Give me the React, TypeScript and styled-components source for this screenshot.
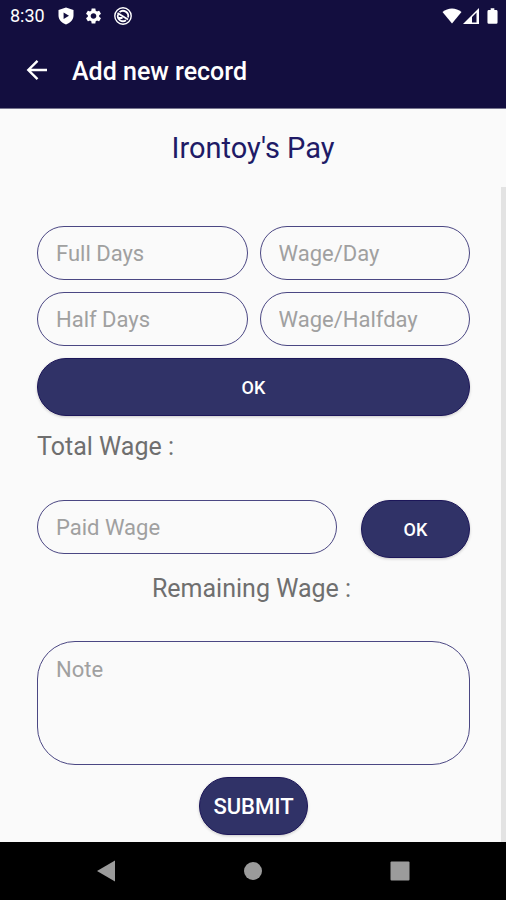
import React from "react";
import styled, { createGlobalStyle } from "styled-components";

const GlobalStyle = createGlobalStyle`
  * { box-sizing: border-box; }
  body {
    margin: 0;
    background: #fafafa;
    font-family: Roboto, "Liberation Sans", sans-serif;
  }
`;

const Screen = styled.div`
  display: flex;
  flex-direction: column;
  min-height: 100vh;
  background: #fafafa;
`;

const StatusBar = styled.div`
  display: flex;
  justify-content: space-between;
  align-items: center;
  height: 32px;
  padding: 0 8px 0 10px;
  background: #130e3f;
  color: #fff;
  font-size: 18px;
  line-height: 32px;
`;

const StatusGroup = styled.div<{ $gap: number }>`
  display: flex;
  align-items: center;
  gap: ${({ $gap }) => $gap}px;
  svg { display: block; }
`;

const Time = styled.span`
  margin-right: 3px;
`;

const AppBar = styled.header`
  display: flex;
  align-items: center;
  gap: 22px;
  height: 77px;
  padding: 0 24px;
  background: #130e3f;
  border-bottom: 1px solid #77758e;
  color: #fff;
`;

const BackButton = styled.button`
  display: block;
  padding: 0;
  border: 0;
  background: none;
  color: inherit;
  svg { display: block; }
`;

const BarTitle = styled.h1`
  margin: 0;
  padding-top: 4px;
  font-size: 25px;
  line-height: 32px;
  font-weight: 500;
`;

const PageTitle = styled.h2`
  margin: 0;
  padding: 20px 0;
  color: #201a66;
  font-size: 29px;
  line-height: 38px;
  font-weight: 400;
  text-align: center;
`;

const ScrollArea = styled.main`
  flex: 1;
  display: flex;
`;

const ScrollTrack = styled.div`
  width: 5px;
  background: #e3e3e3;
`;

const Form = styled.form`
  flex: 1;
  min-width: 0;
  display: flex;
  flex-direction: column;
  gap: 12px;
  padding: 39px 31px 7px 37px;
`;

const FieldGrid = styled.div`
  display: grid;
  grid-template-columns: 1fr 1fr;
  gap: 12px;
`;

const PaidRow = styled.div`
  display: grid;
  grid-template-columns: 1fr 109px;
  align-items: start;
  gap: 24px;
`;

const Field = styled.input`
  width: 100%;
  min-width: 0;
  height: 54px;
  padding: 0 18px;
  border: 1px solid #4b4783;
  border-radius: 27px;
  background: transparent;
  color: #212121;
  font: 400 22px/28px Roboto, "Liberation Sans", sans-serif;
  &::placeholder { color: #a0a0a0; opacity: 1; }
`;

const NoteField = styled.textarea`
  display: block;
  width: 100%;
  height: 124px;
  padding: 14px 18px;
  border: 1px solid #4b4783;
  border-radius: 38px;
  background: transparent;
  color: #212121;
  font: 400 22px/28px Roboto, "Liberation Sans", sans-serif;
  resize: none;
  &::placeholder { color: #a0a0a0; opacity: 1; }
`;

const PillButton = styled.button<{ $large?: boolean }>`
  height: 58px;
  padding: 2px 0 0;
  border: 1px solid #1c1659;
  border-radius: 29px;
  background: #303267;
  box-shadow: 0 1px 3px rgba(0, 0, 0, 0.2);
  color: #fff;
  font: 500 ${({ $large }) => ($large ? 22 : 18)}px/28px Roboto, "Liberation Sans", sans-serif;
`;

const SubmitButton = styled(PillButton)`
  align-self: center;
  width: 109px;
`;

const Result = styled.output<{ $centered?: boolean }>`
  display: block;
  height: ${({ $centered }) => ($centered ? 59 : 60)}px;
  padding: 3px 4px 0 0;
  color: #6f6f6f;
  font-size: 25px;
  line-height: 32px;
  text-align: ${({ $centered }) => ($centered ? "center" : "left")};
`;

const NavBar = styled.nav`
  display: grid;
  grid-template-columns: repeat(3, 1fr);
  height: 58px;
  padding: 0 32px;
  background: #000;
`;

const NavButton = styled.button`
  display: flex;
  align-items: center;
  justify-content: center;
  padding: 0;
  border: 0;
  background: none;
  color: #9b9b9b;
`;

const ShieldIcon = () => (
  <svg width="16" height="18" viewBox="0 0 16 18" aria-hidden="true">
    <path fill="#fff" fillRule="evenodd" d="M8 0.5 15.5 3v5.5c0 4.2-3.1 7.4-7.5 9-4.4-1.600-7.500-4.800-7.500-9V3ZM5.600 5.500v6.500L11 8.750Z" />
  </svg>
);

const GearIcon = () => (
  <svg width="19" height="20" viewBox="0 0 24 24" aria-hidden="true">
    <path fill="#fff" d="M19.140 12.940c.040-.300.060-.610.060-.940 0-.320-.020-.640-.070-.940l2.030-1.580c.180-.140.230-.410.120-.610l-1.920-3.320c-.120-.220-.370-.290-.590-.220l-2.390.960c-.500-.380-1.030-.700-1.620-.940l-.360-2.540c-.040-.240-.240-.410-.480-.410h-3.840c-.240 0-.430.170-.470.410l-.360 2.540c-.590.240-1.130.570-1.620.940l-2.390-.960c-.220-.080-.470 0-.590.220L2.740 8.870c-.120.210-.080.470.120.610l2.030 1.580c-.050.300-.090.630-.090.940s.020.640.070.940l-2.030 1.580c-.180.140-.230.410-.120.610l1.920 3.320c.120.220.370.290.590.220l2.390-.960c.500.380 1.030.700 1.620.940l.360 2.540c.050.240.240.410.480.410h3.840c.240 0 .440-.170.470-.410l.360-2.540c.590-.240 1.130-.560 1.620-.940l2.390.960c.220.080.470 0 .590-.220l1.920-3.320c.120-.220.070-.470-.120-.610l-2.010-1.580ZM12 15.600c-1.980 0-3.600-1.620-3.600-3.600s1.620-3.600 3.600-3.600 3.600 1.620 3.600 3.600-1.620 3.600-3.600 3.600Z" />
  </svg>
);

const DisturbIcon = () => (
  <svg width="20" height="20" viewBox="0 0 20 20" fill="none" stroke="#fff" aria-hidden="true">
    <circle cx="10" cy="10" r="8.200" strokeWidth="1.400" />
    <path d="M6.500 6.200A5.200 5.200 0 0 1 15 11.500M13 14.200a5.200 5.200 0 0 1-8-5.700M4.500 7l10.500 6.500M5.500 12h4" strokeWidth="1.800" />
  </svg>
);

const WifiIcon = () => (
  <svg width="20" height="16" viewBox="0 0 20 16" aria-hidden="true">
    <path fill="#fff" d="M0.500 4C6-.700 14-.700 19.500 4L10 15.500Z" />
  </svg>
);

const SignalIcon = () => (
  <svg width="16" height="16" viewBox="0 0 16 16" aria-hidden="true">
    <path fill="#fff" fillRule="evenodd" d="M0 16 16 0v16ZM9 9v5.500h4.500V4.500Z" />
  </svg>
);

const BatteryIcon = () => (
  <svg width="11" height="18" viewBox="0 0 12 18" aria-hidden="true">
    <path fill="#fff" d="M4 0.500h4v2h2q1.500 0 1.500 1.500v12q0 1.500-1.500 1.500H2Q.500 17.500.500 16V4Q.500 2.500 2 2.500h2Z" />
  </svg>
);

const ArrowIcon = () => (
  <svg width="26" height="26" viewBox="0 0 26 26" fill="none" stroke="currentColor" strokeWidth="2.400" aria-hidden="true">
    <path d="M23 13H4.500M13.500 3.800 4.300 13l9.200 9.200" />
  </svg>
);

export default function App() {
  return (
    <Screen>
      <GlobalStyle />
      <StatusBar>
        <StatusGroup $gap={10}>
          <Time>8:30</Time>
          <ShieldIcon />
          <GearIcon />
          <DisturbIcon />
        </StatusGroup>
        <StatusGroup $gap={8}>
          <StatusGroup $gap={1}>
            <WifiIcon />
            <SignalIcon />
          </StatusGroup>
          <BatteryIcon />
        </StatusGroup>
      </StatusBar>
      <AppBar>
        <BackButton type="button" aria-label="Back">
          <ArrowIcon />
        </BackButton>
        <BarTitle>Add new record</BarTitle>
      </AppBar>
      <PageTitle>Irontoy's Pay</PageTitle>
      <ScrollArea>
        <Form onSubmit={(event) => event.preventDefault()}>
          <FieldGrid>
            <Field aria-label="Full Days" placeholder="Full Days" inputMode="numeric" />
            <Field aria-label="Wage/Day" placeholder="Wage/Day" inputMode="numeric" />
            <Field aria-label="Half Days" placeholder="Half Days" inputMode="numeric" />
            <Field aria-label="Wage/Halfday" placeholder="Wage/Halfday" inputMode="numeric" />
          </FieldGrid>
          <PillButton type="button">OK</PillButton>
          <Result>Total Wage :</Result>
          <PaidRow>
            <Field aria-label="Paid Wage" placeholder="Paid Wage" inputMode="numeric" />
            <PillButton type="button">OK</PillButton>
          </PaidRow>
          <Result $centered>Remaining Wage :</Result>
          <NoteField aria-label="Note" placeholder="Note" />
          <SubmitButton type="submit" $large>SUBMIT</SubmitButton>
        </Form>
        <ScrollTrack />
      </ScrollArea>
      <NavBar>
        <NavButton type="button" aria-label="Back">
          <svg width="20" height="22" viewBox="0 0 20 22" aria-hidden="true">
            <path fill="currentColor" d="M1 11 19 .500v21Z" />
          </svg>
        </NavButton>
        <NavButton type="button" aria-label="Home">
          <svg width="20" height="20" viewBox="0 0 20 20" aria-hidden="true">
            <circle cx="10" cy="10" r="9" fill="currentColor" />
          </svg>
        </NavButton>
        <NavButton type="button" aria-label="Recent apps">
          <svg width="20" height="20" viewBox="0 0 20 20" aria-hidden="true">
            <rect x="0.500" y="0.500" width="19" height="19" rx="1" fill="currentColor" />
          </svg>
        </NavButton>
      </NavBar>
    </Screen>
  );
}
